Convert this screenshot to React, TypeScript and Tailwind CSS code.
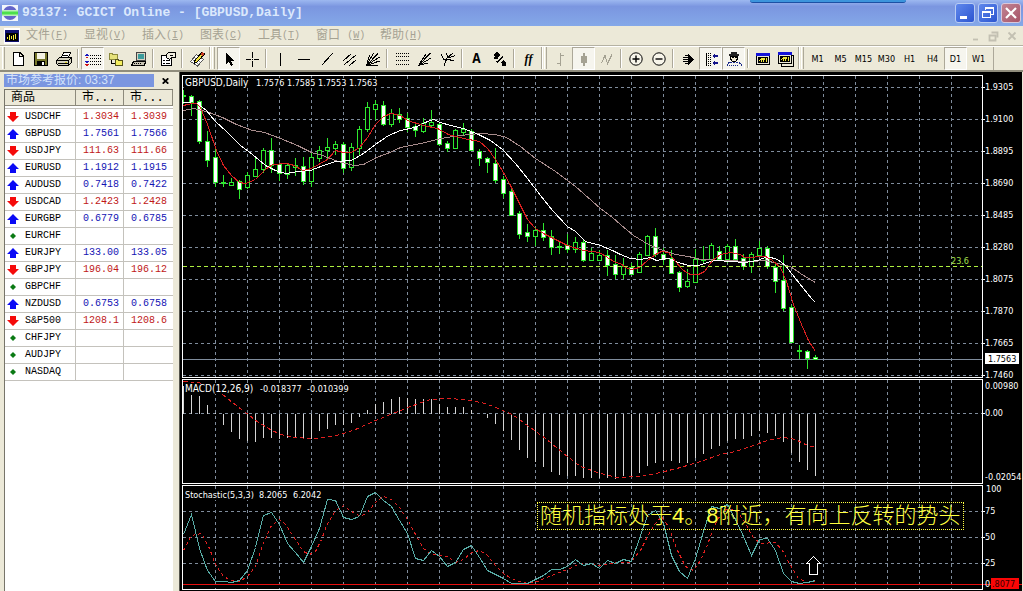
import React from "react";

type Quote = { symbol: string; dir: "up" | "down" | "flat"; bid?: string; ask?: string };

const quotes: Quote[] = [
  { symbol: "USDCHF", dir: "down", bid: "1.3034", ask: "1.3039" },
  { symbol: "GBPUSD", dir: "up", bid: "1.7561", ask: "1.7566" },
  { symbol: "USDJPY", dir: "down", bid: "111.63", ask: "111.66" },
  { symbol: "EURUSD", dir: "up", bid: "1.1912", ask: "1.1915" },
  { symbol: "AUDUSD", dir: "up", bid: "0.7418", ask: "0.7422" },
  { symbol: "USDCAD", dir: "down", bid: "1.2423", ask: "1.2428" },
  { symbol: "EURGBP", dir: "up", bid: "0.6779", ask: "0.6785" },
  { symbol: "EURCHF", dir: "flat" },
  { symbol: "EURJPY", dir: "up", bid: "133.00", ask: "133.05" },
  { symbol: "GBPJPY", dir: "down", bid: "196.04", ask: "196.12" },
  { symbol: "GBPCHF", dir: "flat" },
  { symbol: "NZDUSD", dir: "up", bid: "0.6753", ask: "0.6758" },
  { symbol: "S&P500", dir: "down", bid: "1208.1", ask: "1208.6" },
  { symbol: "CHFJPY", dir: "flat" },
  { symbol: "AUDJPY", dir: "flat" },
  { symbol: "NASDAQ", dir: "flat" },
];

// [high, low, body top, body bottom, falling]
const candles: number[][] = [
  [18, 32, 23, 24, 0], [23, 44, 24, 30, 1], [28, 72, 29, 69, 1], [59, 95, 69, 88, 1],
  [77, 115, 85, 110, 1], [103, 115, 110, 111, 0], [106, 114, 110, 113, 0], [108, 127, 109, 117, 1],
  [100, 117, 103, 115, 0], [85, 104, 97, 104, 0], [76, 101, 78, 97, 0], [66, 101, 78, 93, 1],
  [91, 109, 92, 101, 1], [91, 107, 93, 102, 0], [86, 104, 93, 95, 0], [85, 113, 94, 109, 1],
  [81, 115, 85, 109, 0], [74, 90, 78, 86, 0], [66, 88, 75, 78, 0], [69, 83, 72, 76, 0],
  [70, 101, 72, 96, 1], [71, 99, 75, 95, 0], [54, 83, 57, 76, 0], [30, 60, 35, 57, 0],
  [28, 48, 32, 37, 0], [29, 54, 33, 52, 1], [37, 55, 41, 52, 0], [36, 51, 42, 47, 1],
  [41, 60, 46, 55, 1], [50, 65, 54, 58, 1], [46, 61, 51, 59, 0], [38, 56, 50, 53, 0],
  [50, 74, 52, 72, 1], [69, 80, 71, 76, 1], [57, 76, 58, 76, 0], [51, 64, 57, 60, 0],
  [57, 78, 59, 78, 1], [77, 94, 79, 86, 1], [85, 101, 86, 90, 1], [76, 111, 91, 108, 1],
  [104, 126, 107, 121, 1], [115, 144, 119, 143, 1], [139, 167, 141, 162, 1], [152, 170, 160, 164, 1],
  [155, 174, 158, 164, 0], [151, 169, 158, 165, 1], [158, 183, 164, 175, 1], [169, 182, 174, 175, 0],
  [162, 181, 173, 177, 1], [165, 181, 170, 177, 0], [167, 190, 170, 188, 1], [176, 189, 181, 188, 0],
  [178, 189, 183, 188, 0], [178, 204, 183, 193, 1], [183, 207, 192, 202, 1], [186, 207, 194, 202, 0],
  [191, 203, 195, 202, 1], [180, 201, 182, 200, 0], [163, 184, 164, 183, 0], [156, 185, 164, 182, 1],
  [176, 193, 182, 187, 1], [178, 202, 186, 201, 1], [199, 220, 200, 215, 1], [197, 216, 209, 214, 0],
  [177, 211, 187, 210, 0], [174, 192, 187, 188, 0], [171, 189, 173, 187, 0], [174, 187, 179, 187, 1],
  [172, 191, 174, 187, 0], [167, 189, 174, 187, 1], [182, 198, 186, 194, 1], [180, 201, 182, 194, 0],
  [169, 185, 176, 183, 0], [174, 197, 176, 194, 1], [190, 221, 195, 209, 1], [183, 239, 208, 236, 1],
  [233, 270, 235, 270, 1], [273, 287, 278, 279, 0], [278, 297, 279, 286, 1], [283, 288, 285, 287, 1],
];

const fastMa =
  "183,33 187,32 192,31 196,31 200,35 207,52 216,78 223,93 231,103 239,110 245,111 255,107 265,97 272,92 286,91 294,93 302,98 311,96 327,87 335,78 343,80 351,80 359,75 367,65 375,52 383,44 391,41 400,43 407,48 423,53 437,56 448,62 463,66 479,69 487,76 495,87 503,100 510,113 518,129 527,147 535,156 543,161 551,165 567,173 583,178 599,180 607,185 615,190 620,191 625,195 631,197 639,195 647,188 655,182 661,179 668,180 675,189 683,198 690,202 698,202 704,199 712,188 720,182 730,180 740,182 744,185 765,184 772,188 780,195 786,209 793,232 801,252 808,268 815,279";
const midMa =
  "183,30 197,31 206,38 214,48 227,60 240,73 252,82 265,93 275,98 285,101 298,99 310,98 323,93 335,89 351,88 363,81 375,72 388,63 400,58 414,55 427,49 433,47 440,50 450,53 463,56 478,62 490,68 502,77 515,91 527,106 540,123 552,138 567,154 575,159 585,169 600,173 612,178 620,182 630,186 640,187 650,185 656,188 668,186 678,190 688,193 698,193 710,189 716,188 730,189 745,190 757,188 767,184 777,187 785,193 795,206 803,216 811,226 815,230";
const slowMa =
  "183,38 193,36 206,39 222,45 236,52 252,58 264,60 280,66 297,73 311,80 322,83 335,88 345,91 354,93 363,92 376,85 387,81 400,75 410,73 425,70 440,66 460,63 480,61 495,62 506,65 520,74 535,86 555,99 575,114 600,136 612,145 620,152 633,163 648,172 660,177 675,182 688,184 700,187 725,188 750,189 765,188 777,191 790,194 800,201 808,206 815,210";

const macdBars = [
  7, 16, 17, 26, 34, 46, 53, 60, 62, 63, 59, 59, 60, 59, 59, 60, 60, 52, 50, 46, 46, 44, 38, 31, 25, 23, 20, 18, 19, 20,
  20, 20, 25, 28, 28, 28, 31, 35, 39, 45, 52, 61, 71, 79, 83, 88, 93, 96, 97, 97, 99, 99, 99, 99, 100, 97, 98, 94, 87,
  84, 82, 82, 84, 84, 79, 75, 70, 67, 62, 60, 60, 57, 52, 54, 57, 63, 74, 83, 91, 97,
];
const macdSignal =
  "183,3 198,4 210,8 222,16 232,24 245,34 258,44 270,51 280,56 295,59 310,60 325,59 340,56 355,51 375,42 390,36 405,30 418,25 430,21 450,20 470,22 485,25 500,31 512,36 527,47 545,60 567,78 580,88 600,95 617,99 640,98 660,94 680,89 700,83 720,76 735,73 750,68 770,61 783,59 795,61 805,66 815,69";

const stochMain = [
  156, 136, 170, 192, 203, 203, 204, 202, 192, 169, 137, 134, 146, 165, 174, 184, 168, 150, 121, 122, 139, 141, 138,
  118, 114, 122, 128, 142, 155, 180, 182, 172, 178, 188, 184, 171, 167, 179, 192, 196, 200, 205, 205, 205, 201, 197,
  191, 191, 188, 181, 187, 185, 190, 182, 185, 181, 183, 160, 137, 132, 145, 177, 193, 200, 180, 153, 128, 130, 126,
  141, 158, 177, 161, 160, 172, 195, 203, 205, 204, 202,
];
const stochSignal =
  "183,172 191,157 201,155 209,170 215,186 223,198 231,202 239,203 247,198 255,188 262,167 271,147 279,141 285,146 295,161 303,173 309,176 315,173 321,161 327,145 335,132 343,127 351,133 360,138 367,134 375,124 383,118 391,121 399,129 407,141 415,156 423,170 431,176 447,178 455,184 463,181 471,174 479,172 487,177 495,187 503,195 511,200 519,203 527,205 537,203 551,197 567,191 580,185 600,187 615,184 630,184 640,172 647,158 655,145 661,138 668,148 676,170 685,188 693,192 700,182 707,166 715,145 722,133 728,130 737,133 745,145 752,158 760,165 775,164 782,172 790,187 798,200 808,204 815,203";

const priceTicks = ["1.9305", "1.9100", "1.8895", "1.8690", "1.8485", "1.8280", "1.8075", "1.7870", "1.7665", "1.7460"];
const columns = Array.from({ length: 24 }, (_, i) => 32 + i * 32);
const barX = (i: number) => 183 + i * 8;

const chartText = "font-['DejaVu_Sans_Condensed','DejaVu_Sans',sans-serif] text-[9px]";
const chartName = "font-['DejaVu_Sans_Condensed','DejaVu_Sans',sans-serif] text-[10px]";

function Grid({ rows }: { rows: number[] }) {
  return (
    <g stroke="#7f8c9c" strokeDasharray="3 3">
      {columns.map((x) => (
        <line key={x} x1={x + 0.5} x2={x + 0.5} y1="0" y2="100%" />
      ))}
      {rows.map((y) => (
        <line key={y} x1="0" x2="100%" y1={y + 0.5} y2={y + 0.5} />
      ))}
    </g>
  );
}

function Plot({ height, label, children, overlay }: { height: string; label: string; children: React.ReactNode; overlay?: React.ReactNode }) {
  return (
    <div className="relative min-w-0 flex-1 overflow-hidden border border-white">
      <svg className={"block w-full " + height} shapeRendering="crispEdges" fill="none" role="img" aria-label={label}>
        {children}
      </svg>
      {overlay}
    </div>
  );
}

function Caption({ parts, y, w, large }: { parts: [number, string][]; y: number; w: number; large?: boolean }) {
  return (
    <>
      <rect x="1" y={y - 8} width={w} height="10" fill="#000" />
      {parts.map(([x, t], i) => (
        <text key={x} x={x} y={y} fill="#fff" className={large && i === 0 ? chartName : chartText}>
          {t}
        </text>
      ))}
    </>
  );
}

function PricePanel() {
  return (
    <div className="flex">
      <Plot height="h-[301px]" label="GBPUSD daily">
        <Grid rows={priceTicks.map((_, i) => 11 + i * 32)} />
        <line x1="0" x2="100%" y1="283.5" y2="283.5" stroke="#7f8c9c" />
        <g transform="translate(-183,-4)">
          {candles.map(([hi, lo, top, bottom, falling], i) => (
            <g key={i} fill="#2ee82e">
              <rect x={barX(i)} y={hi} width="1" height={lo - hi} />
              <rect x={barX(i) - 2} y={top} width="5" height={bottom - top + 1} />
              {bottom - top > 1 && (
                <rect x={barX(i) - 1} y={top + 1} width="3" height={bottom - top - 1} fill={falling ? "#fff" : "#000"} />
              )}
            </g>
          ))}
        </g>
        <g transform="translate(-182.5,-3.5)">
          <polyline points={slowMa} stroke="#a88c8c" />
          <polyline points={midMa} stroke="#fff" />
          <polyline points={fastMa} stroke="#d82020" />
        </g>
        <line x1="0" x2="100%" y1="190.5" y2="190.5" stroke="#adee3f" strokeDasharray="4 3" />
        <text x="768" y="188" fill="#a4e04c" className={chartText}>
          23.6
        </text>
        <Caption large parts={[[2, "GBPUSD,Daily"], [73, "1.7576"], [104, "1.7585"], [135, "1.7553"], [166, "1.7563"]]} y={10} w={194} />
      </Plot>
      <svg className="block h-[303px] w-[39px] shrink-0 overflow-visible" shapeRendering="crispEdges" fill="#fff">
        {priceTicks.map((t, i) => (
          <g key={t}>
            <rect x="0" y={12 + i * 32} width="2" height="1" />
            <text x="2" y={15 + i * 32} className={chartText}>
              {t}
            </text>
          </g>
        ))}
        <rect x="2" y="278" width="34" height="11" />
        <text x="5" y="287" fill="#000" className={chartText}>
          1.7563
        </text>
      </svg>
    </div>
  );
}

function MacdPanel() {
  return (
    <div className="flex">
      <Plot height="h-[103px]" label="MACD">
        <Grid rows={[33]} />
        <g transform="translate(-182.5,-1.5)">
          {macdBars.map((v, i) => (
            <line key={i} x1={barX(i)} x2={barX(i)} y1="35" y2={v} stroke="#d4d4d4" />
          ))}
          <polyline points={macdSignal} stroke="#e02020" strokeDasharray="4 3" />
        </g>
        <Caption large parts={[[2, "MACD(12,26,9)"], [77, "-0.018377"], [124, "-0.010399"]]} y={12} w={166} />
      </Plot>
      <svg className={"block h-[105px] w-[39px] shrink-0 " + chartText} fill="#fff">
        <text x="2" y="10">0.00980</text>
        <text x="2" y="37">0.00</text>
        <text x="2" y="101">-0.02054</text>
        <rect x="0" y="34" width="2" height="1" />
      </svg>
    </div>
  );
}

function StochasticPanel() {
  return (
    <div className="flex">
      <Plot
        height="h-[103px]"
        label="Stochastic"
        overlay={
          <p className="absolute left-[354px] top-4 h-7 whitespace-nowrap border border-dotted border-[#ffff40] px-0.5 font-['Liberation_Sans','Noto_Sans_CJK_SC',sans-serif] text-[22px] leading-[25px] font-light text-[#ffff40]">
            随机指标处于<b>4</b>。<b>8</b>附近，有向上反转的势头
          </p>
        }
      >
        <Grid rows={[25, 51, 77]} />
        <g transform="translate(-182.5,-107.5)">
          <polyline points={stochSignal} stroke="#e02020" strokeDasharray="3 3" />
          <polyline points={stochMain.map((v, i) => barX(i) + "," + v).join(" ")} stroke="#58aca6" />
          <path d="M813 178 l-7 7 h3 v11 h8 v-11 h3 z" stroke="#fff" fill="#000" />
        </g>
        <line x1="0" x2="100%" y1="98.5" y2="98.5" stroke="#e81010" />
        <Caption parts={[[2, "Stochastic(5,3,3)"], [76, "8.2065"], [110, "6.2042"]]} y={12} w={138} />
      </Plot>
      <svg className={"block h-[105px] w-[39px] shrink-0 " + chartText} shapeRendering="crispEdges" fill="#fff">
        <text x="3" y="7">100</text>
        <text x="2" y="29">75</text>
        <text x="2" y="55">50</text>
        <text x="2" y="81">25</text>
        <rect x="0" y="26" width="2" height="1" />
        <rect x="0" y="52" width="2" height="1" />
        <rect x="0" y="78" width="2" height="1" />
        <rect x="0" y="99" width="40" height="1" fill="#e81010" />
        <rect x="8" y="93" width="28" height="11" fill="#fa0606" />
        <text x="9" y="102" fill="#300">.8077</text>
        <text x="2" y="102">0</text>
      </svg>
    </div>
  );
}

function Direction({ dir }: { dir: Quote["dir"] }) {
  return (
    <svg className="block h-3 w-3" viewBox="0 0 12 12">
      {dir === "up" && <path d="M6 1 L12 7 H9 V11 H3 V7 H0 Z" fill="#0a0af5" />}
      {dir === "down" && <path d="M6 11 L12 5 H9 V1 H3 V5 H0 Z" fill="#f50a0a" />}
      {dir === "flat" && <path d="M6 3 L9 6 L6 9 L3 6 Z" fill="#0b7a14" />}
    </svg>
  );
}

function MarketWatch() {
  const price = { up: "text-[#1414b4]", down: "text-[#c01818]", flat: "" };
  return (
    <aside className="flex w-[180px] shrink-0 flex-col border-r border-[#55554c] bg-[#ece9d8] pl-1 pr-1.5">
      <div className="flex h-[17px] items-center">
        <h2 className="h-[13px] w-[156px] overflow-hidden whitespace-nowrap bg-[#7b96e0] pl-0.5 font-['Liberation_Sans','Noto_Sans_CJK_SC',sans-serif] text-[12px] leading-[13px] text-[#d3e2fb]">
          市场参考报价: 03:37
        </h2>
        <button aria-label="关闭" className="ml-1 grid h-[13px] w-4 place-items-center">
          <svg className="h-1.5 w-[7px]" viewBox="0 0 7 6" stroke="#000" strokeWidth="1.7">
            <path d="M0.7 0.3 L6.3 5.7 M6.3 0.3 L0.7 5.7" />
          </svg>
        </button>
      </div>
      <div className="flex-1 border-l border-t border-[#77756a] bg-white">
        <table className="w-full table-fixed border-separate border-spacing-0 text-left">
          <colgroup>
            <col className="w-[71px]" />
            <col className="w-12" />
            <col />
          </colgroup>
          <thead>
            <tr>
              {["商品", "市...", "市..."].map((h, i) => (
                <th key={i} className="h-[19px] border-b border-[#c4c2bc] p-0 align-top font-normal">
                  <div className="h-4 border-b border-r border-[#8d8a7c] bg-[#ece9d8] pt-0.5 pl-1.5 font-['Liberation_Mono','Noto_Sans_CJK_SC',monospace] text-[12px] leading-[13px] text-black">
                    {h}
                  </div>
                </th>
              ))}
            </tr>
          </thead>
          <tbody className="font-['Liberation_Mono',monospace] text-[10px] leading-4">
            {quotes.map((q) => (
              <tr key={q.symbol}>
                <td className="h-[17px] border-b border-r border-[#c4c2bc] p-0 text-black">
                  <div className="flex items-center gap-1.5 pl-0.5">
                    <Direction dir={q.dir} />
                    {q.symbol}
                  </div>
                </td>
                <td className={"border-b border-r border-[#c4c2bc] p-0 pr-1 text-right " + price[q.dir]}>{q.bid}</td>
                <td className={"border-b border-[#c4c2bc] p-0 pr-1.5 text-right " + price[q.dir]}>{q.ask}</td>
              </tr>
            ))}
          </tbody>
        </table>
      </div>
    </aside>
  );
}

const K = "#000";
const G = "#a5a293";

const icons: Record<string, React.ReactNode> = {
  new: <path d="M3.5 1.5 H10 L13.5 5 V14.5 H3.5 Z M9.5 1.5 V5.5 H13.5" fill="#fff" stroke={K} />,
  save: (
    <>
      <rect x="1.5" y="1.5" width="13" height="13" fill="#76762a" stroke={K} />
      <rect x="4" y="2" width="8" height="6" fill="#f4f2e4" />
      <rect x="4" y="10" width="8" height="5" fill={K} />
      <rect x="9" y="11" width="2" height="3" fill="#fff" />
    </>
  ),
  print: (
    <>
      <path d="M5.5 6.5 L7.5 1.5 H14.5 L12.5 6.5 Z" fill="#fff" stroke={K} />
      <path d="M7 4.5 H12" stroke={K} />
      <path d="M0.5 9.5 L3.5 6.5 H15.5 V11.5 L12.5 14.5 H2.5 L0.5 12.5 Z" fill="#d6d3c0" stroke={K} />
      <path d="M1 9.5 H12.5 V14 M12.5 9.5 L15 7 M2 12.5 H12" stroke={K} />
      <rect x="9" y="11" width="2" height="1" fill="#d8d020" />
    </>
  ),
  list: (
    <>
      <path d="M5 4.5 H16 M5 7.5 H16 M5 10.5 H16 M5 13.5 H16" stroke={K} strokeDasharray="1 1" />
      <path d="M2 2 L4 5 H0 Z M2 13 L4 10 H0 Z" fill="#1818c0" />
      <path d="M2 8 L4 5.5 H0 Z M2 15.5 L4 13 H0 Z" fill="#d01818" />
    </>
  ),
  tree: (
    <>
      <path d="M1.5 2.5 H4 L5 3.5 H9.5 V8.5 H1.5 Z" fill="#e6e27a" stroke="#8c8a3c" />
      <path d="M3.5 9 V12.5 H7" stroke={K} />
      <path d="M7.5 8.5 H10 L11 9.5 H14.5 V14.5 H7.5 Z" fill="#f4ee60" stroke="#55541c" />
    </>
  ),
  pc: (
    <>
      <rect x="5.5" y="1.5" width="9" height="8" fill="#d8d4c4" stroke="#444" />
      <rect x="7" y="3" width="6" height="5" fill="#3c9c9c" />
      <path d="M2.5 10.5 H14.5 L13.5 14.5 H0.5 Z" fill="#c8c4b4" stroke={K} />
      <path d="M3 12.5 H11" stroke={K} strokeDasharray="1 1" />
    </>
  ),
  props: (
    <>
      <rect x="1.5" y="4.5" width="10" height="10" fill="#fff" stroke={K} />
      <path d="M3 9.5 H5 M6 9.5 H10 M3 12.5 H5 M6 12.5 H10" stroke={K} />
      <path d="M6.5 3.5 L8.5 1.5 H15.5 V6.5 H11.5 L9.5 8.5 L6.5 6.5 Z" fill="#f1eee0" stroke={K} />
      <path d="M10 4.5 H13" stroke={K} />
    </>
  ),
  pencil: (
    <>
      <path d="M1.5 10.5 L7.5 3.5 L14.5 8.5 L8.5 15 Z" fill="#fff" stroke="#555" />
      <path d="M4 9 L9 13 M6 7 L11 11" stroke="#888" />
      <path d="M13 1 L15.5 3 L7.5 11.5 L5.5 12 L6 9.5 Z" fill="#f0e040" stroke={K} />
      <path d="M13 1 L15.5 3 L14 5 L11.5 3 Z" fill="#c83820" />
    </>
  ),
  cursor: <path d="M5 1 V13 L8 10.5 L10 15 L12 14 L10 9.8 H13.5 Z" fill={K} />,
  cross: <path d="M8.5 1 V7 M8.5 10 V16 M2 8.5 H7 M10 8.5 H15 M8 8.5 H9" stroke={K} />,
  vline: <path d="M7.5 2 V15" stroke={K} />,
  hline: <path d="M2 8.5 H14" stroke={K} />,
  diag: <path d="M2.5 14.5 L13.5 2.5" stroke={K} />,
  channel: <path d="M1.5 9.5 L9.5 2.5 M2.5 13.5 L14.5 3.5 M7.5 14.5 L14.5 8.5" stroke={K} />,
  fan: <path d="M1.5 14.5 L4.5 4 M1.5 14.5 L8.5 2 M1.5 14.5 L13 2.5 M1.5 14.5 L14.5 6 M1.5 14.5 L14.5 10 M2 14 H13 M2 12 L5 9" stroke={K} />,
  fibo: <path d="M2 2.5 H15 M2 5.5 H15 M2 9.5 H15 M2 13.5 H15" stroke={K} strokeDasharray="1 1" />,
  fibofan: <path d="M1.5 14.5 L9 3 M1.5 14.5 L13.5 2 M1.5 14.5 L14 7 M1.5 14.5 L11 12 M2 14 L5 10" stroke={K} />,
  fork: <path d="M4 14.5 L7 7 L13 2 M1.5 3.5 L3.5 8 L7 8.5 M6 2 L9 7 L15 4.5 M7 8 L14 10" stroke={K} />,
  shapes: (
    <>
      <path d="M5 1 L8.5 4 L7 6 H3 L1.5 4 Z M2 6 H6 V8 H2 Z M11.5 9 L15 12 H13.5 V15 H9.5 V12 H8 Z" fill={K} />
      <path d="M5 11.5 L11 5.5 M6 12 L4 10" stroke={K} />
    </>
  ),
  bars: <path d="M7.5 2 V15 M4 12.5 H7 M8 4.5 H11" stroke={G} strokeWidth="1.6" />,
  candle: (
    <>
      <path d="M8 2 V15" stroke={G} strokeWidth="2" />
      <rect x="5" y="5" width="6" height="7" fill={G} />
    </>
  ),
  line: <path d="M2.5 12 L6 4.5 L8.5 12.5 L13 3.5" stroke={G} />,
  zoomin: (
    <g stroke={K} shapeRendering="auto">
      <circle cx="8" cy="8" r="6.2" fill="#f7f5ea" />
      <path d="M4.5 8 H11.5 M8 4.5 V11.5" strokeWidth="1.4" />
    </g>
  ),
  zoomout: (
    <g stroke={K} shapeRendering="auto">
      <circle cx="8" cy="8" r="6.2" fill="#f7f5ea" />
      <path d="M4.5 8 H11.5" strokeWidth="1.4" />
    </g>
  ),
  scroll: (
    <>
      <path d="M8 3 L14 8.5 L8 14 Z" fill={K} />
      <path d="M3 6.5 H8 M5 4.5 H8 M3 8.5 H8 M3 10.5 H8 M5 12.5 H8" stroke={K} />
    </>
  ),
  shift: (
    <>
      <path d="M3.5 2 V15" stroke={K} />
      <path d="M5.5 2 V15 M7.5 2 V15" stroke={K} strokeDasharray="1 1" />
      <path d="M9 5 L12 2 V8 Z M9 12 L12 9 V15 Z M12 4 H15 V6 H12 Z M12 11 H15 V13 H12 Z" fill="#14148c" />
    </>
  ),
  expert: (
    <>
      <path d="M5 0.5 H11 V3 H13 V4.5 H3 V3 H5 Z" fill="#222" />
      <path d="M4.5 5 H11.5 V8 L9.5 10.5 H6.5 L4.5 8 Z" fill="#f0e8d0" stroke={K} />
      <path d="M6 6.5 H8 M9 6.5 H11" stroke={K} />
      <path d="M1 15 V13 L4 11 H6 L8 12 L10 11 H12 L15 13 V15" stroke="#1c2c8c" strokeDasharray="2 1" />
      <path d="M3 14.5 H13" stroke="#1c2c8c" strokeDasharray="1 1" />
    </>
  ),
  chart: (
    <>
      <rect x="1.5" y="2.5" width="13" height="11" fill={K} stroke={K} />
      <rect x="1" y="2" width="14" height="3" fill="#1414d8" />
      <rect x="2.5" y="5.5" width="11" height="7" stroke="#ece9d8" />
      <path d="M4 10 L6 8 V11 L8 7 V11 L10 7 M11.5 7 V11" stroke="#f0e83c" />
    </>
  ),
  charts: (
    <>
      <rect x="3.5" y="4.5" width="12" height="11" fill="#ece9d8" stroke={K} />
      <rect x="0.5" y="1.5" width="13" height="11" fill={K} stroke={K} />
      <rect x="0" y="1" width="14" height="3" fill="#1414d8" />
      <rect x="1.5" y="4.5" width="11" height="7" stroke="#ece9d8" />
      <path d="M3 9 L5 7 V10 L7 6 V10 L9 6 M10.5 6 V10" stroke="#f0e83c" />
    </>
  ),
};

const toolGroups: string[][] = [
  ["new", "save", "print", "|", "list*", "tree", "pc", "|", "props", "|", "pencil"],
  ["cursor*", "cross", "|", "vline", "hline", "diag", "channel", "fan", "|", "fibo", "fibofan", "fork", "|", "@A", "shapes", "|", "@ff"],
  ["bars", "candle*", "line", "|", "zoomin", "zoomout", "|", "scroll", "shift*", "expert*", "|", "chart", "charts"],
  ["@M1", "@M5", "@M15", "@M30", "@H1", "@H4", "@D1*", "@W1"],
];

function ToolItem({ code }: { code: string }) {
  if (code === "|") {
    return (
      <div className="flex w-1.5 justify-center py-0.5">
        <div className="w-0.5 border-l border-r border-l-[#aca899] border-r-white" />
      </div>
    );
  }
  const pressed = code.endsWith("*");
  const name = code.replace("*", "");
  const isText = name.startsWith("@");
  const text = name.slice(1);
  const face =
    text === "A"
      ? "font-['Liberation_Mono',monospace] text-[14px] font-bold"
      : text === "ff"
        ? "font-['Liberation_Serif',serif] text-[12px] font-bold italic"
        : "pt-0.5 font-['DejaVu_Sans_Condensed','DejaVu_Sans',sans-serif] text-[9px]";
  return (
    <button
      aria-label={isText ? undefined : name}
      aria-pressed={pressed}
      className={
        "grid h-[23px] w-[23px] place-items-center overflow-hidden border text-black " +
        (pressed ? "border-t-[#aca899] border-l-[#aca899] border-r-white border-b-white bg-[#f6f5ee]" : "border-transparent")
      }
    >
      {isText ? (
        <span className={"leading-none " + face}>{text}</span>
      ) : (
        <svg className="h-4 w-4" viewBox="0 0 16 16" fill="none" shapeRendering="crispEdges">
          {icons[name]}
        </svg>
      )}
    </button>
  );
}

function Toolbar() {
  return (
    <div role="toolbar" className="flex h-[26px] border-b-2 border-t border-b-[#8f8c7c] border-t-white bg-[#ece9d8]">
      {toolGroups.map((g, i) => (
        <div key={i} className="flex">
          <div className={"flex justify-end gap-px pb-px " + (i === 0 ? "w-1.5 pr-px" : "w-[9px] pr-0.5")}>
            {i > 0 && <div className="w-0.5 border-l border-[#aca899] bg-white" />}
            <div className="w-[3px] border-l border-r border-l-white border-r-[#aca899]" />
          </div>
          {g.map((c, j) => (
            <ToolItem key={j} code={c} />
          ))}
        </div>
      ))}
      <div className="w-1 border-r border-[#aca899]" />
    </div>
  );
}

const menus: [string, string, string][] = [
  ["文件", "F", "w-[58px]"],
  ["显视", "V", "w-[58px]"],
  ["插入", "I", "w-[58px]"],
  ["图表", "C", "w-[58px]"],
  ["工具", "T", "w-[58px]"],
  ["窗口 ", "W", "w-16"],
  ["帮助", "H", "w-[58px]"],
];

function MenuBar() {
  return (
    <nav className="flex h-5 items-center border-b border-[#b5b2a3] bg-[#ece9d8] pl-1 pr-0.5 text-[#a5a293]">
      <svg className="mr-1.5 h-4 w-4" viewBox="0 0 16 16" fill="none" shapeRendering="crispEdges">
        <rect width="16" height="16" fill="#fff" />
        <rect x="1" y="2" width="14" height="12" fill="#101070" />
        <rect x="2" y="5" width="12" height="8" fill="#000" />
        <path d="M3.5 9 V11 M5.5 7 V12 M7.5 8 V11 M9.5 7 V12 M11.5 6 V11" stroke="#f0e83c" />
      </svg>
      {menus.map(([t, k, w]) => (
        <button
          key={k}
          className={"flex items-center whitespace-pre text-left font-['Liberation_Mono','Noto_Sans_CJK_SC',monospace] text-[12px] leading-4 " + w}
        >
          {t}
          <span className="text-[10px]">
            (<u>{k}</u>)
          </span>
        </button>
      ))}
      <div className="ml-auto flex text-[#c3c0b2]">
        {["M5 11.5 H10", "M5.5 4.5 H11.5 V9.5 M3.5 7.5 H9.5 V12.5 H3.5 Z", "M4.5 4.5 L11.5 11.5 M11.5 4.5 L4.5 11.5"].map((d, i) => (
          <button key={d} aria-label={["最小化图表", "还原图表", "关闭图表"][i]} className="grid h-[18px] w-[18px] place-items-center">
            <svg className="h-4 w-4" viewBox="0 0 16 16" fill="none" stroke="currentColor" strokeWidth="1.8">
              <path d={d} />
            </svg>
          </button>
        ))}
      </div>
    </nav>
  );
}

function TitleBar() {
  return (
    <header className="relative flex h-[26px] items-center bg-linear-to-b from-[#9db8f0] via-[#7b96e0] via-25% to-[#84a8e8] pl-0.5 pr-0.5">
      <svg className="h-4 w-4" viewBox="0 0 16 16">
        <rect width="16" height="16" fill="#f2f6fc" />
        <circle cx="8" cy="8" r="7" fill="#6464c8" />
        <path d="M0 5 H16 V11 H0 Z" fill="#b8f0b8" />
        <path d="M0 6.5 H16 V9.5 H0 Z" fill="#4ce04c" />
      </svg>
      <h1 className="ml-1 font-['Liberation_Mono',monospace] text-[13px] leading-4 font-bold text-[#dbe8fc]">
        93137: GCICT Online - [GBPUSD,Daily]
      </h1>
      <div className="absolute top-0 right-[117px] h-[3px] w-[156px] rounded-b-sm border-b border-[#1c50a4] bg-[#3c94dc]" />
      <div className="ml-auto flex gap-[3px]">
        <button aria-label="最小化" className="h-5 w-5 rounded-[3px] border border-[#b8ccf4] bg-linear-to-br from-[#6088ec] to-[#2c54d0]">
          <svg viewBox="0 0 18 18">
            <path d="M4 12 H11 V15 H4 Z" fill="#fff" />
          </svg>
        </button>
        <button aria-label="还原" className="h-5 w-5 rounded-[3px] border border-[#b8ccf4] bg-linear-to-br from-[#6088ec] to-[#2c54d0]">
          <svg viewBox="0 0 18 18" fill="none" stroke="#fff" shapeRendering="crispEdges">
            <path d="M6.5 6 V3.5 H14.5 V10.5 H12 M6 4.5 H15 M3.5 7.5 H11.5 V13.5 H3.5 Z M3 8.5 H12" />
          </svg>
        </button>
        <button aria-label="关闭" className="h-5 w-5 rounded-[3px] border border-[#d8c8dc] bg-linear-to-br from-[#c08494] to-[#a85468]">
          <svg viewBox="0 0 18 18" fill="none" stroke="#fff" strokeWidth="2.2">
            <path d="M4 4 L14 14 M14 4 L4 14" />
          </svg>
        </button>
      </div>
    </header>
  );
}

export default function App() {
  return (
    <div className="flex min-h-screen flex-col bg-[#ece9d8]">
      <TitleBar />
      <MenuBar />
      <Toolbar />
      <div className="flex flex-1">
        <MarketWatch />
        <main className="flex min-w-0 flex-1 flex-col gap-px border-r border-[#ece9d8] bg-black pl-0.5 pt-[3px] pb-px">
          <PricePanel />
          <MacdPanel />
          <StochasticPanel />
        </main>
      </div>
    </div>
  );
}
